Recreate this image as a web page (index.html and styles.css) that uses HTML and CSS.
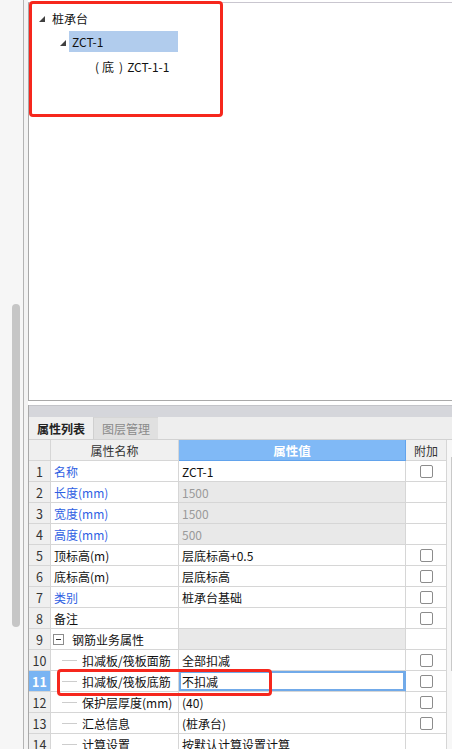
FILE: index.html
```html
<!DOCTYPE html>
<html lang="zh">
<head>
<meta charset="utf-8">
<link rel="stylesheet" href="styles.css">
</head>
<body>
<div class="app">
  <div class="side">
    <div class="thumb"></div>
  </div>
  <div class="gutter"></div>
  <div class="main">
    <div class="tree-panel">
      <div class="tree-row lvl0">
        <svg class="exp" width="6" height="6" viewBox="0 0 6 6"><polygon points="6,0 6,6 0,6"/></svg>
        <span class="label">桩承台</span>
      </div>
      <div class="tree-row lvl1">
        <svg class="exp" width="6" height="6" viewBox="0 0 6 6"><polygon points="6,0 6,6 0,6"/></svg>
        <span class="label sel">ZCT-1</span>
      </div>
      <div class="tree-row lvl2">
        <span class="label"><span class="po">(</span>底<span class="pc">)</span>ZCT-1-1</span>
      </div>
      <div class="mark tree-mark"></div>
    </div>

    <div class="prop-panel">
      <div class="strip"></div>
      <div class="tabs">
        <div class="tab active">属性列表</div>
        <div class="tab">图层管理</div>
      </div>
      <div class="grid-wrap">
        <div class="grid">
          <div class="row head">
            <div class="c num"></div>
            <div class="c name hc">属性名称</div>
            <div class="c val hv">属性值</div>
            <div class="c add hc">附加</div>
          </div>
          <div class="row">
            <div class="c num">1</div>
            <div class="c name blue">名称</div>
            <div class="c val">ZCT-1</div>
            <div class="c add"><span class="cb"></span></div>
          </div>
          <div class="row">
            <div class="c num">2</div>
            <div class="c name blue">长度(mm)</div>
            <div class="c val ro">1500</div>
            <div class="c add"></div>
          </div>
          <div class="row">
            <div class="c num">3</div>
            <div class="c name blue">宽度(mm)</div>
            <div class="c val ro">1500</div>
            <div class="c add"></div>
          </div>
          <div class="row">
            <div class="c num">4</div>
            <div class="c name blue">高度(mm)</div>
            <div class="c val ro">500</div>
            <div class="c add"></div>
          </div>
          <div class="row">
            <div class="c num">5</div>
            <div class="c name">顶标高(m)</div>
            <div class="c val">层底标高+0.5</div>
            <div class="c add"><span class="cb"></span></div>
          </div>
          <div class="row">
            <div class="c num">6</div>
            <div class="c name">底标高(m)</div>
            <div class="c val">层底标高</div>
            <div class="c add"><span class="cb"></span></div>
          </div>
          <div class="row">
            <div class="c num">7</div>
            <div class="c name blue">类别</div>
            <div class="c val">桩承台基础</div>
            <div class="c add"><span class="cb"></span></div>
          </div>
          <div class="row">
            <div class="c num">8</div>
            <div class="c name">备注</div>
            <div class="c val"></div>
            <div class="c add"><span class="cb"></span></div>
          </div>
          <div class="row">
            <div class="c num">9</div>
            <div class="c name"><span class="toggle"></span>钢筋业务属性</div>
            <div class="c val ro"></div>
            <div class="c add"></div>
          </div>
          <div class="row">
            <div class="c num">10</div>
            <div class="c name"><span class="branch"></span>扣减板/筏板面筋</div>
            <div class="c val">全部扣减</div>
            <div class="c add"><span class="cb"></span></div>
          </div>
          <div class="row current">
            <div class="c num">11</div>
            <div class="c name"><span class="branch"></span>扣减板/筏板底筋</div>
            <div class="c val focus">不扣减</div>
            <div class="c add"><span class="cb"></span></div>
            <div class="mark row-mark"></div>
          </div>
          <div class="row">
            <div class="c num">12</div>
            <div class="c name"><span class="branch"></span>保护层厚度(mm)</div>
            <div class="c val">(40)</div>
            <div class="c add"><span class="cb"></span></div>
          </div>
          <div class="row">
            <div class="c num">13</div>
            <div class="c name"><span class="branch"></span>汇总信息</div>
            <div class="c val">(桩承台)</div>
            <div class="c add"><span class="cb"></span></div>
          </div>
          <div class="row">
            <div class="c num">14</div>
            <div class="c name"><span class="branch"></span>计算设置</div>
            <div class="c val">按默认计算设置计算</div>
            <div class="c add"></div>
          </div>
        </div>
        <div class="vscroll"><div class="vthumb"></div></div>
      </div>
    </div>
  </div>
</div>
</body>
</html>
```

FILE: styles.css
```css
* { box-sizing: border-box; }

html, body {
  margin: 0;
  padding: 0;
  width: 452px;
  height: 749px;
  overflow: hidden;
  background: #f7f7f7;
  font-family: "Noto Sans CJK SC", "Microsoft YaHei", "Noto Sans", sans-serif;
  font-size: 12px;
  color: #111;
}

.app {
  display: flex;
  height: 749px;
}

.side {
  width: 24px;
  flex: none;
  border-right: 1px solid #b4b4b4;
  background: #f6f6f6;
  padding-top: 304px;
  padding-left: 12px;
}

.thumb {
  width: 8px;
  height: 323px;
  background: #c6c6c6;
  border-radius: 4px;
}

.gutter {
  width: 4px;
  flex: none;
  background: #f3f3f3;
}

.main {
  flex: 1;
  display: flex;
  flex-direction: column;
  padding-top: 2px;
  background: #ffffff;
  min-width: 0;
}

/* ---------- tree panel ---------- */
.tree-panel {
  position: relative;
  height: 399px;
  flex: none;
  background: #fff;
  border-top: 1px solid #c9c6cf;
  border-left: 1px solid #a9a9a9;
  border-bottom: 1px solid #a9a9a9;
  padding-top: 3px;
}

.tree-row {
  height: 24px;
  display: flex;
  align-items: center;
}

.tree-row .exp { fill: #404040; flex: none; }

.lvl0 { padding-left: 10px; }
.lvl0 .exp { margin-right: 7px; margin-top: 1px; }

.lvl1 { padding-left: 31px; }
.lvl1 .exp { margin-right: 3px; margin-top: 1px; }

.lvl2 { padding-left: 66px; }

.label { line-height: 21px; white-space: nowrap; }

.po { margin-right: 3px; }
.pc { margin-left: 5px; margin-right: 4px; }

.sel {
  display: block;
  width: 109px;
  height: 21px;
  margin-top: -2px;
  padding-left: 3px;
  background: #b1cced;
}

.mark {
  position: absolute;
  border: 3px solid #f6271d;
  border-radius: 4px;
  pointer-events: none;
  z-index: 5;
}

.tree-mark {
  left: 0;
  top: -2px;
  width: 194px;
  height: 116px;
}

/* ---------- property panel ---------- */
.prop-panel {
  margin-top: 4px;
  flex: 1;
  display: flex;
  flex-direction: column;
  border-left: 1px solid #a9a9a9;
  background: #f0f0f0;
  min-height: 0;
}

.strip {
  height: 12px;
  flex: none;
  background: #d5d6db;
  border-top: 1px solid #c3c4c9;
}

.tabs {
  height: 23px;
  flex: none;
  display: flex;
  background: #eeeeee;
  border-bottom: 1px solid #d2d2d2;
}

.tab {
  width: 65px;
  display: flex;
  align-items: center;
  justify-content: center;
  color: #8a8a8a;
  background: #e0e0e0;
  border-left: 1px solid #d0d0d0;
  border-top: 1px solid #d6d6d6;
}

.tab.active {
  width: 64px;
  color: #222;
  font-weight: 600;
  background: #efefef;
  border: none;
}

.grid-wrap {
  flex: 1;
  display: flex;
  background: #ffffff;
}

.grid {
  width: 418px;
  flex: none;
}

.row {
  position: relative;
  display: grid;
  grid-template-columns: 22px 128px 227px 41px;
  height: 21px;
}

.c {
  border-right: 1px solid #d6d6d6;
  border-bottom: 1px solid #d6d6d6;
  display: flex;
  align-items: center;
  white-space: nowrap;
  overflow: hidden;
  background: #fff;
}

.num {
  justify-content: center;
  background: #efefef;
  color: #333;
  font-size: 12.5px;
}

.name { padding-left: 3px; }
.val { padding-left: 3px; }
.add { justify-content: center; }

.hc {
  justify-content: center;
  padding-left: 0;
  background: #f0f0f0;
  color: #333;
}

.hv {
  justify-content: center;
  padding-left: 0;
  background: #80b9f6;
  border-color: #62a3ec;
  color: #fff;
  font-weight: 600;
  font-size: 12.5px;
}

.head .num { background: #efefef; }

.blue { color: #2f5fe3; }

.ro {
  background: #e9e9e9;
  color: #9a9a9a;
}

.cb {
  width: 13px;
  height: 13px;
  border: 1px solid #8c8c8c;
  border-radius: 2px;
  background: #fff;
}

.toggle {
  position: relative;
  width: 11px;
  height: 11px;
  flex: none;
  border: 1px solid #8c8c8c;
  background: #fff;
  margin-left: -1px;
  margin-right: 8px;
}

.toggle::after {
  content: "";
  position: absolute;
  left: 2px;
  top: 4px;
  width: 5px;
  height: 1px;
  background: #333;
}

.branch {
  width: 15px;
  height: 1px;
  flex: none;
  background: #cdcdcd;
  margin-left: 8px;
  margin-right: 5px;
}

.current .num {
  background: #79b4f3;
  color: #fff;
  font-weight: 700;
}

.focus {
  box-shadow: inset 0 0 0 2px #71aae9;
  border-right-color: #71aae9;
}

.row-mark {
  left: 28px;
  top: -2px;
  width: 215px;
  height: 27px;
}

.vscroll {
  flex: 1;
  background: #f7f7f7;
  padding-top: 17px;
  padding-left: 4px;
}

.vthumb {
  height: 214px;
  border-left: 1px solid #c9c9c9;
  border-top: 1px solid #c9c9c9;
  background: #f0f0f0;
}
```
